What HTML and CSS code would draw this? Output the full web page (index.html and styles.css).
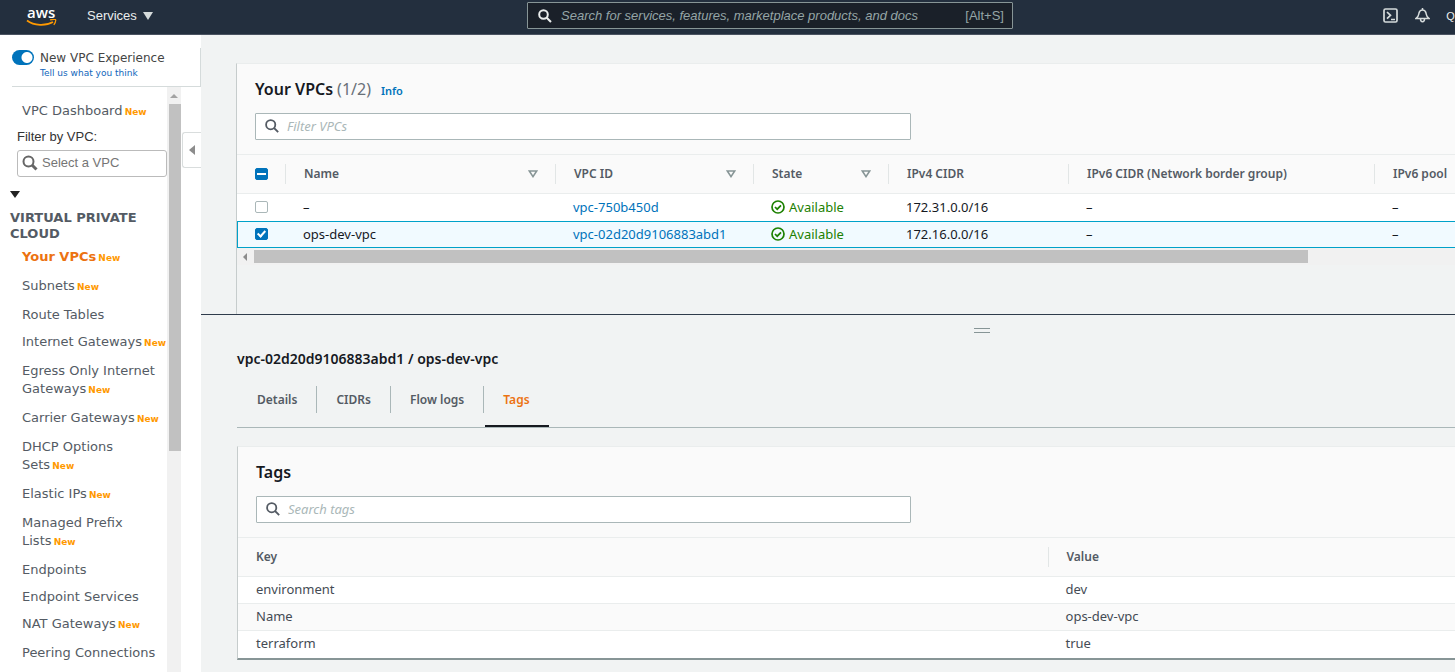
FILE: index.html
```html
<!DOCTYPE html>
<html lang="en">
<head>
<meta charset="utf-8">
<title>Your VPCs | VPC Management Console</title>
<link rel="stylesheet" href="styles.css">
</head>
<body>
<header class="topbar">
  <div class="topbar-left">
    <a class="logo" href="#" aria-label="AWS home">
      <span class="logo-text">aws</span>
      <svg class="logo-smile" width="32" height="8" viewBox="0 0 32 8" fill="none" stroke="#f90"><path d="M1 1.5C8 7 20 7 27 3" stroke-width="1.7"/><path d="M24 .9c3-.9 5.400-.8 5.600-.1.3 1-.4 3.200-1.800 5" stroke-width="1.300"/></svg>
    </a>
    <button class="services" type="button">Services <svg width="10" height="8" viewBox="0 0 10 8"><path d="M0 0h10L5 8z" fill="#d5dbdb"/></svg></button>
  </div>
  <label class="global-search">
    <svg width="14" height="14" viewBox="0 0 14 14" fill="none" stroke="#eaeded" stroke-width="2"><circle cx="5.500" cy="5.500" r="4.300"/><path d="M8.700 8.700 13 13"/></svg>
    <input type="text" aria-label="Search" placeholder="Search for services, features, marketplace products, and docs">
    <span>[Alt+S]</span>
  </label>
  <div class="topbar-right">
    <button type="button" aria-label="CloudShell"><svg width="15" height="15" viewBox="0 0 15 15" fill="none" stroke="#d5dbdb" stroke-width="1.700"><rect x="1" y="1" width="13" height="13" rx="1.500"/><path d="m4 4 3.500 3.300L4 10.700M8 11.500h4"/></svg></button>
    <button type="button" aria-label="Notifications"><svg width="15" height="15" viewBox="0 0 15 15" fill="none" stroke="#d5dbdb" stroke-width="1.500"><path d="M1 10.500c2.500-1.500 2.500-3 3-5.500C4.500 3 5.500 2 7.500 2S10.500 3 11 5c.5 2.500.5 4 3 5.500zM7.500 0v2M5.500 11c0 3.500 4 3.500 4 0"/></svg></button>
    <button type="button" class="account">Q</button>
  </div>
</header>

<div class="layout">
  <nav class="sidebar" aria-label="VPC">
    <div class="experience">
      <input type="checkbox" id="new-exp" class="switch" role="switch" checked>
      <div>
        <label for="new-exp">New VPC Experience</label>
        <a href="#">Tell us what you think</a>
      </div>
    </div>
    <div class="side-body">
      <div class="side-scroll">
        <div class="dash"><a href="#">VPC Dashboard</a> <b class="new">New</b></div>
        <label class="filter-label" for="vpc-filter">Filter by VPC:</label>
        <div class="vpc-select">
          <svg width="16" height="16" viewBox="0 0 16 16" fill="none" stroke="#666"><circle cx="6.500" cy="6.500" r="5" stroke-width="2"/><path d="m10 10 4.500 4.500" stroke-width="3"/></svg>
          <input id="vpc-filter" type="text" placeholder="Select a VPC">
        </div>
        <button class="fold" type="button" aria-label="Collapse section"><svg width="10" height="7" viewBox="0 0 10 7"><path d="M0 0h10L5 7z" fill="#222"/></svg></button>
        <h2 class="section">VIRTUAL PRIVATE CLOUD</h2>
        <ul class="side-list">
          <li class="has-new current"><a href="#">Your VPCs</a> <b class="new">New</b></li>
          <li class="has-new"><a href="#">Subnets</a> <b class="new">New</b></li>
          <li><a href="#">Route Tables</a></li>
          <li class="has-new"><a href="#">Internet Gateways</a> <b class="new">New</b></li>
          <li class="has-new"><a href="#">Egress Only Internet<br>Gateways</a> <b class="new">New</b></li>
          <li class="has-new"><a href="#">Carrier Gateways</a> <b class="new">New</b></li>
          <li class="has-new"><a href="#">DHCP Options<br>Sets</a> <b class="new">New</b></li>
          <li class="has-new"><a href="#">Elastic IPs</a> <b class="new">New</b></li>
          <li class="has-new"><a href="#">Managed Prefix<br>Lists</a> <b class="new">New</b></li>
          <li><a href="#">Endpoints</a></li>
          <li><a href="#">Endpoint Services</a></li>
          <li class="has-new"><a href="#">NAT Gateways</a> <b class="new">New</b></li>
          <li><a href="#">Peering Connections</a></li>
        </ul>
      </div>
      <div class="vbar"><svg width="8" height="4" viewBox="0 0 8 4"><path d="M0 4h8L4 0z" fill="#a3a3a3"/></svg><div class="vthumb"></div></div>
      <button class="collapse" type="button" aria-label="Collapse navigation"><svg width="6" height="10" viewBox="0 0 6 10"><path d="M6 0v10L0 5z" fill="#8c8c8c"/></svg></button>
    </div>
  </nav>

  <main class="content">
    <section class="upper">
      <div class="panel vpcs">
        <div class="panel-head">
          <h1>Your VPCs <span class="count">(1/2)</span> <a href="#" class="info">Info</a></h1>
          <label class="search">
            <svg width="14" height="14" viewBox="0 0 14 14" fill="none" stroke="#545b64" stroke-width="1.800"><circle cx="5.700" cy="5.700" r="4.600"/><path d="m9 9 4.200 4.200"/></svg>
            <input type="text" aria-label="Filter VPCs" placeholder="Filter VPCs">
          </label>
        </div>
        <table class="vpc-table">
          <colgroup><col class="c-check"><col class="c-name"><col class="c-id"><col class="c-state"><col class="c-v4"><col class="c-v6"><col></colgroup>
          <thead>
            <tr>
              <th><span><input type="checkbox" class="check partial" aria-label="Select all"></span></th>
              <th><span>Name <svg width="10" height="8" viewBox="0 0 10 8"><path d="M1.300 1h7.400L5 6.600z" fill="none" stroke="#879596" stroke-width="1.600"/></svg></span></th>
              <th><span>VPC ID <svg width="10" height="8" viewBox="0 0 10 8"><path d="M1.300 1h7.400L5 6.600z" fill="none" stroke="#879596" stroke-width="1.600"/></svg></span></th>
              <th><span>State <svg width="10" height="8" viewBox="0 0 10 8"><path d="M1.300 1h7.400L5 6.600z" fill="none" stroke="#879596" stroke-width="1.600"/></svg></span></th>
              <th><span>IPv4 CIDR</span></th>
              <th><span>IPv6 CIDR (Network border group)</span></th>
              <th><span>IPv6 pool</span></th>
            </tr>
          </thead>
          <tbody>
            <tr>
              <td><input type="checkbox" class="check" aria-label="Select vpc-750b450d"></td>
              <td>–</td>
              <td><a href="#">vpc-750b450d</a></td>
              <td><span class="ok"><svg width="14" height="14" viewBox="0 0 14 14" fill="none" stroke="#1d8102" stroke-width="1.700"><circle cx="7" cy="7" r="6"/><path d="m4 7 2.200 2.200L10 5.300"/></svg>Available</span></td>
              <td>172.31.0.0/16</td>
              <td>–</td>
              <td>–</td>
            </tr>
            <tr class="selected">
              <td><input type="checkbox" class="check" checked aria-label="Select vpc-02d20d9106883abd1"></td>
              <td>ops-dev-vpc</td>
              <td><a href="#">vpc-02d20d9106883abd1</a></td>
              <td><span class="ok"><svg width="14" height="14" viewBox="0 0 14 14" fill="none" stroke="#1d8102" stroke-width="1.700"><circle cx="7" cy="7" r="6"/><path d="m4 7 2.200 2.200L10 5.300"/></svg>Available</span></td>
              <td>172.16.0.0/16</td>
              <td>–</td>
              <td>–</td>
            </tr>
          </tbody>
        </table>
        <div class="hbar"><svg width="4" height="8" viewBox="0 0 4 8"><path d="M4 0v8L0 4z" fill="#8c8c8c"/></svg><div class="hthumb"></div></div>
      </div>
    </section>

    <section class="lower">
      <div class="grip"></div>
      <h2 class="detail-title">vpc-02d20d9106883abd1 / ops-dev-vpc</h2>
      <div class="tabs" role="tablist">
        <button type="button" role="tab">Details</button>
        <button type="button" role="tab">CIDRs</button>
        <button type="button" role="tab">Flow logs</button>
        <button type="button" role="tab" aria-selected="true">Tags</button>
      </div>
      <div class="panel tags">
        <div class="panel-head">
          <h2>Tags</h2>
          <label class="search">
            <svg width="14" height="14" viewBox="0 0 14 14" fill="none" stroke="#545b64" stroke-width="1.800"><circle cx="5.700" cy="5.700" r="4.600"/><path d="m9 9 4.200 4.200"/></svg>
            <input type="text" aria-label="Search tags" placeholder="Search tags">
          </label>
        </div>
        <table class="tag-table">
          <colgroup><col class="c-key"><col></colgroup>
          <thead><tr><th><span>Key</span></th><th><span>Value</span></th></tr></thead>
          <tbody>
            <tr><td>environment</td><td>dev</td></tr>
            <tr><td>Name</td><td>ops-dev-vpc</td></tr>
            <tr><td>terraform</td><td>true</td></tr>
          </tbody>
        </table>
      </div>
    </section>
  </main>
</div>
</body>
</html>
```
FILE: styles.css
```css
* { box-sizing: border-box; }
body {
  margin: 0;
  height: 100vh;
  display: flex;
  flex-direction: column;
  overflow: hidden;
  background: #f1f3f3;
  color: #16191f;
  font: 13px/18px "Noto Sans", sans-serif;
}
a { color: #0073bb; text-decoration: none; }
button { background: none; border: 0; padding: 0; font: inherit; color: inherit; cursor: pointer; }
input { font: inherit; color: inherit; margin: 0; }
svg { display: block; flex: none; }
h1, h2, ul { margin: 0; padding: 0; }

/* Top bar */
.topbar {
  flex: none;
  height: 35px;
  display: grid;
  grid-template-columns: 527px 1fr 442px;
  align-items: center;
  padding-bottom: 3px;
  background: #232f3e;
  border-bottom: 1px solid #4a5361;
  color: #eaeded;
  font-family: "Liberation Sans", Arial, sans-serif;
}
.topbar-left { display: flex; align-items: center; gap: 28px; padding-left: 26px; }
.logo { width: 33px; color: #fff; }
.logo-text { display: block; padding-left: 1px; font: 600 15px/14px "Open Sans", sans-serif; }
.services { display: flex; align-items: center; gap: 6px; font-size: 13px; }
.global-search {
  display: flex;
  align-items: center;
  gap: 9px;
  height: 27px;
  padding: 0 8px 0 10px;
  background: #1a2029;
  border: 1px solid #879596;
  border-radius: 1px;
  color: #95a5a6;
}
.global-search input { flex: 1; min-width: 0; border: 0; background: none; padding: 0; outline: 0; }
.global-search input::placeholder { color: #95a5a6; font-style: italic; opacity: 1; }
.topbar-right { display: flex; align-items: center; justify-content: flex-end; gap: 17px; }
.account { width: 9px; margin-left: -1px; font-size: 11px; }

/* Navigation */
.layout { flex: 1; min-height: 0; display: flex; }
.sidebar {
  flex: none;
  width: 201px;
  display: flex;
  flex-direction: column;
  background: #fff;
  font-family: "DejaVu Sans", Verdana, sans-serif;
  color: #545b64;
}
.experience {
  display: flex;
  gap: 6px;
  margin: 13px 0 0 12px;
  height: 39px;
  border-right: 1px solid #d5dbdb;
  border-bottom: 1px solid #d5dbdb;
}
.experience label { display: block; font-size: 12px; line-height: 20px; color: #444; }
.experience a { display: block; font-size: 9px; line-height: 10px; color: #1166bb; }
.switch {
  appearance: none;
  flex: none;
  width: 22px;
  height: 15px;
  margin-top: 2px;
  border-radius: 8px;
  background: radial-gradient(circle at 15px 50%, #fff 5px, #0073bb 6px);
}
.side-body { flex: 1; min-height: 0; display: flex; align-items: flex-start; }
.side-scroll { width: 167px; height: 100%; overflow: hidden; padding-top: 15px; }
.sidebar li a, .dash a { color: #545b64; }
.new { margin-left: -2px; color: #f90; font-size: 9px; line-height: 1; }
.dash { padding-left: 22px; }
.filter-label { display: block; margin: 8px 0 0 17px; color: #333; font: 13px/18px "Liberation Sans", Arial, sans-serif; }
.vpc-select {
  display: flex;
  align-items: center;
  gap: 4px;
  height: 27px;
  margin: 4px 0 0 17px;
  padding: 0 4px 2px;
  border: 1px solid #bbb;
  border-radius: 3px;
  font: 13px "Liberation Sans", Arial, sans-serif;
}
.vpc-select input { flex: 1; min-width: 0; border: 0; padding: 0; outline: 0; }
.vpc-select input::placeholder { color: #757575; opacity: 1; }
.fold { display: block; margin: 14px 0 0 10px; }
.section { margin: 12px 0 0 10px; font-size: 13px; line-height: 16px; }
.side-list { list-style: none; padding: 6px 0 0 22px; }
.side-list li { padding-bottom: 9px; white-space: nowrap; }
.side-list .has-new { padding-bottom: 11px; }
.sidebar .current a { color: #ec7211; font-weight: 700; }
.vbar {
  width: 14px;
  height: 100%;
  padding-top: 7px;
  background: #f1f1f1;
  display: flex;
  flex-direction: column;
  align-items: center;
  gap: 6px;
}
.vthumb { width: 12px; height: 60%; align-self: flex-end; background: #c1c1c1; }
.collapse {
  width: 19px;
  height: 36px;
  margin: 45px 0 0 1px;
  display: flex;
  align-items: center;
  justify-content: center;
  border: 1px solid #d9dddd;
  border-right: 0;
  border-radius: 3px 0 0 3px;
}

/* Panels */
.content { flex: 1; min-width: 0; display: flex; flex-direction: column; }
.upper {
  flex: none;
  height: 280px;
  padding: 28px 0 0 35px;
  overflow: hidden;
  border-bottom: 1px solid #2f3b4b;
}
.panel { border-left: 1px solid #c6cccc; border-top: 1px solid #eaeded; }
.vpcs { height: 100%; }
.panel-head { padding: 14px 18px; background: #fafafa; }
.panel-head h1, .panel-head h2 { display: flex; align-items: baseline; gap: 4px; height: 22px; font-size: 16px; line-height: 22px; font-weight: 600; }
.count { color: #687078; font-weight: 400; }
.info { font-size: 11px; margin-left: 6px; font-weight: 600; }
.search {
  display: flex;
  align-items: center;
  gap: 8px;
  width: 55.5%;
  height: 27px;
  margin-top: 13px;
  padding: 0 9px 1px;
  background: #fff;
  border: 1px solid #aab7b8;
  border-radius: 1px;
}
.search input { flex: 1; min-width: 0; border: 0; padding: 0; outline: 0; }
.search input::placeholder { color: #aab7b8; font-style: italic; opacity: 1; }

/* Tables */
table { width: 100%; table-layout: fixed; border-collapse: separate; border-spacing: 0; background: #fff; }
.c-check { width: 49px; }
.c-name { width: 270px; }
.c-id { width: 198px; }
.c-state { width: 135px; }
.c-v4 { width: 180px; }
.c-v6 { width: 306px; }
.c-key { width: 66.6%; }
th {
  height: 40px;
  padding: 0;
  background: #fafafa;
  border-top: 1px solid #eaeded;
  border-bottom: 1px solid #eaeded;
  color: #545b64;
  font-size: 12px;
  font-weight: 600;
  text-align: left;
  white-space: nowrap;
}
th span {
  display: flex;
  align-items: center;
  justify-content: space-between;
  height: 20px;
  padding: 0 17px 1px 18px;
  border-right: 1px solid #e2e6e6;
}
th:last-child span { border-right: 0; padding-right: 0; }
td { height: 27px; padding: 0 0 2px 17px; white-space: nowrap; border-bottom: 1px solid #eaeded; }
td:first-child { padding-left: 18px; }
.vpc-table tbody tr:first-child td { border-bottom: 0; }
.selected td { background: #f1faff; border-top: 1px solid #00a1c9; border-bottom: 1px solid #00a1c9; }
.selected td:first-child { border-left: 1px solid #00a1c9; padding-left: 17px; }
.tag-table td { color: #444b54; }
.tag-table tr:nth-child(2) td { background: #fafafa; }
.tag-table tr:last-child td { border-bottom: 0; padding-bottom: 3px; }
.ok { display: flex; align-items: center; gap: 4px; color: #1d8102; }
.check {
  appearance: none;
  display: block;
  width: 13px;
  height: 12px;
  border: 1px solid #aab7b8;
  border-radius: 2px;
  background: #fff;
}
.check:checked, .partial { border-color: #0073bb; background: #0073bb; position: relative; }
.partial::after { content: ""; position: absolute; left: 1px; top: 4px; width: 9px; height: 2px; background: #fff; }
.check:checked::after {
  content: "";
  position: absolute;
  left: 3px;
  top: 0;
  width: 3px;
  height: 6px;
  border: solid #fff;
  border-width: 0 2px 2px 0;
  transform: rotate(42deg);
}
.hbar { display: flex; align-items: center; gap: 7px; height: 17px; padding-left: 6px; background: #f1f1f1; }
.hthumb { width: 87%; height: 13px; background: #c1c1c1; }

/* Detail pane */
.lower { flex: 1; min-height: 0; padding: 13px 0 0 36px; }
.grip { width: 16px; height: 5px; margin-left: 60.5%; border: solid #879596; border-width: 1px 0; }
.detail-title { margin-top: 17px; font-size: 14px; line-height: 18px; font-weight: 600; }
.tabs { display: flex; margin-top: 18px; padding-bottom: 14px; height: 42px; border-bottom: 1px solid #aab7b8; color: #545b64; font-size: 12px; font-weight: 600; }
.tabs button { position: relative; padding: 1px 19px 0; border-right: 1px solid #aab7b8; height: 27px; }
.tabs button:first-child { padding-left: 20px; }
.tabs button:last-child { border: 0; color: #ec7211; }
.tabs button:last-child::after { content: ""; position: absolute; left: 1px; right: 0; bottom: -14px; height: 2px; background: #16191f; }
.tags { margin-top: 18px; border-bottom: 2px solid #879596; }
```
